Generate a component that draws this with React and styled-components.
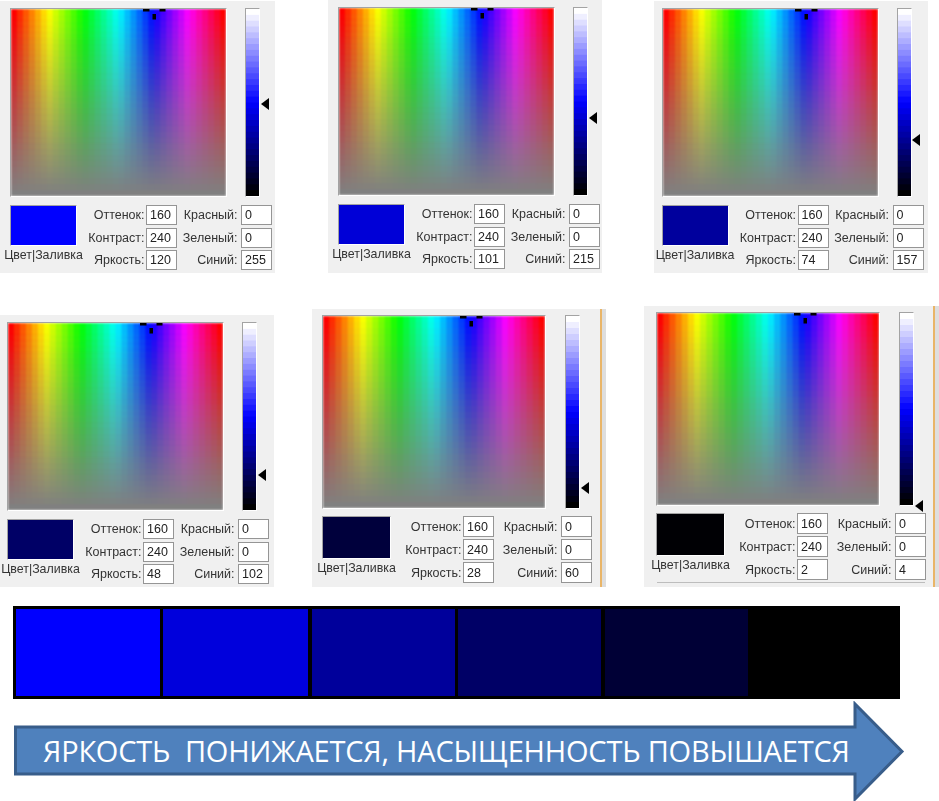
import React from 'react';
import styled, { createGlobalStyle } from 'styled-components';

const Global = createGlobalStyle`
  html, body { margin: 0; padding: 0; background: #fff; }
  body { width: 939px; height: 801px; overflow: hidden; font-family: "Liberation Sans", Arial, sans-serif; }
`;

const Page = styled.main`
  width: 939px;
  height: 801px;
  display: flex;
  flex-direction: column;
`;

const PanelRow = styled.section`
  display: flex;
  align-items: flex-end;
  height: ${p => p.$height}px;
  margin-top: ${p => p.$top}px;
`;

const Panel = styled.article`
  box-sizing: border-box;
  flex: none;
  display: flex;
  flex-direction: column;
  width: ${p => p.$width}px;
  height: ${p => p.$height}px;
  margin-left: ${p => p.$offset}px;
  padding: ${p => p.$top}px 0 0 ${p => p.$pad}px;
  background: #f0f0f0;
  ${p => p.$edge && 'border-right: 2px solid #e9b568; box-shadow: 4px 0 0 #dedede;'}
`;

const Pickers = styled.div`
  display: flex;
  gap: ${p => (p.$large ? 19 : 18)}px;
`;

const Field = styled.div`
  position: relative;
  flex: none;
  width: ${p => (p.$large ? 224 : 217)}px;
  height: ${p => (p.$large ? 194 : 189)}px;
  box-sizing: border-box;
  border: 1px solid;
  border-color: #a3a3a3 #fff #fff #a3a3a3;
  overflow: hidden;
  svg { display: block; width: 100%; height: 100%; filter: blur(0.8px); }
`;

const Crosshair = styled.svg`
  position: absolute;
  top: 0;
  left: 61.5%;
  width: 23px !important;
  height: 12px !important;
  filter: none !important;
`;

const LumBar = styled.div`
  position: relative;
  flex: none;
  width: 13px;
  box-sizing: content-box;
  height: ${p => (p.$large ? 192 : 187)}px;
  border: 1px solid;
  border-color: #a3a3a3 #fff #fff #a3a3a3;
  overflow: visible;
  svg { display: block; width: 100%; height: 100%; filter: blur(0.4px); }
`;

const Pointer = styled.span`
  position: absolute;
  left: 14.5px;
  top: ${p => p.$at - 6}px;
  width: 0;
  height: 0;
  border-style: solid;
  border-width: 6.5px 8px 6.5px 0;
  border-color: transparent #000 transparent transparent;
`;

const Controls = styled.div`
  display: flex;
  margin-top: ${p => (p.$large ? 7 : 8)}px;
`;

const SwatchColumn = styled.div`
  flex: none;
  width: ${p => (p.$large ? 69 : 67)}px;
  display: flex;
  flex-direction: column;
  align-items: center;
`;

const Swatch = styled.div`
  width: 100%;
  height: ${p => (p.$large ? 43 : 41)}px;
  box-sizing: border-box;
  border: 1px solid #fff;
  border-color: #a3a3a3 #fff #fff #a3a3a3;
  background: ${p => p.$color};
`;

const SwatchLabel = styled.div`
  margin-top: 2px;
  font-size: 12.4px;
  line-height: 15px;
  white-space: nowrap;
  color: #333;
  filter: blur(0.25px);
`;

const Values = styled.div`
  display: grid;
  grid-template-columns: ${p => (p.$large ? '72px 31px 67px 31px' : '69px 31px 64px 31px')};
  grid-auto-rows: ${p => (p.$large ? 21 : 20)}px;
  row-gap: ${p => (p.$large ? 2 : 2.5)}px;
`;

const ValueLabel = styled.span`
  align-self: center;
  padding-right: ${p => (p.$second ? 3.5 : 1.5)}px;
  text-align: right;
  font-size: 12.5px;
  white-space: nowrap;
  color: #333;
  filter: blur(0.25px);
`;

const ValueBox = styled.div`
  box-sizing: border-box;
  display: flex;
  align-items: center;
  padding-left: 3px;
  background: #fff;
  border: 1.5px solid #959595;
  font-size: 12.5px;
  color: #222;
  filter: blur(0.2px);
`;

const Rule = styled.div`
  height: 1px;
  margin: ${p => p.$top}px ${p => p.$right}px 0 1px;
  background: ${p => p.$color};
`;

const Scale = styled.section`
  box-sizing: border-box;
  display: flex;
  gap: 3.4px;
  width: 887px;
  height: 93px;
  margin: 19px 0 0 13px;
  padding: 3px;
  background: #000;
`;

const ScaleCell = styled.div`
  width: ${p => p.$width}px;
  flex: none;
  background: ${p => p.$color};
`;

const ArrowBanner = styled.section`
  position: relative;
  display: flex;
  align-items: center;
  width: 892px;
  height: 100px;
  margin: 2px 0 0 13px;
`;

const ArrowShape = styled.svg`
  position: absolute;
  inset: 0;
  width: 100%;
  height: 100%;
`;

const ArrowText = styled.h2`
  position: relative;
  margin: 0 0 0 30px;
  font-family: "Open Sans", "Noto Sans", sans-serif;
  font-weight: 400;
  font-size: 29px;
  line-height: 32px;
  letter-spacing: -0.2px;
  white-space: pre;
  color: #fff;
`;

const hsl = (h, s, l) => `hsl(${h} ${s}% ${l}%)`;

function ColorField() {
  const cols = 36;
  const rows = 32;
  const cells = [];
  for (let r = 0; r < rows; r++) {
    for (let c = 0; c < cols; c++) {
      const h = (c / (cols - 1)) * 360;
      const s = 100 * (1 - r / (rows - 1));
      cells.push(<rect key={`${r}-${c}`} x={c} y={r} width={2} height={2} fill={hsl(h, s, 50)} />);
    }
  }
  return (
    <svg viewBox={`0 0 ${cols} ${rows}`} preserveAspectRatio="none" aria-hidden="true">
      {cells}
    </svg>
  );
}

function LumStrip() {
  const rows = 32;
  const cells = [];
  for (let r = 0; r < rows; r++) {
    cells.push(<rect key={r} x={0} y={r} width={1} height={2} fill={hsl(240, 100, 100 * (1 - r / (rows - 1)))} />);
  }
  return (
    <svg viewBox={`0 0 1 ${rows}`} preserveAspectRatio="none" aria-hidden="true">
      {cells}
    </svg>
  );
}

function Picker({ panel }) {
  const { large, color, at, hue, sat, lum, red, green, blue } = panel;
  return (
    <>
      <Pickers $large={large}>
        <Field $large={large}>
          <ColorField />
          <Crosshair viewBox="0 0 23 12" aria-hidden="true">
            <rect x="0" y="0" width="6.5" height="2.5" fill="#000" />
            <rect x="16.5" y="0" width="6" height="2.5" fill="#000" />
            <rect x="9.5" y="5" width="3.5" height="5.5" fill="#000" />
          </Crosshair>
        </Field>
        <LumBar $large={large}>
          <LumStrip />
          <Pointer $at={at} />
        </LumBar>
      </Pickers>
      <Controls $large={large}>
        <SwatchColumn $large={large}>
          <Swatch $large={large} $color={color} />
          <SwatchLabel>Цвет|Заливка</SwatchLabel>
        </SwatchColumn>
        <Values $large={large}>
          <ValueLabel>Оттенок:</ValueLabel>
          <ValueBox>{hue}</ValueBox>
          <ValueLabel $second>Красный:</ValueLabel>
          <ValueBox>{red}</ValueBox>
          <ValueLabel>Контраст:</ValueLabel>
          <ValueBox>{sat}</ValueBox>
          <ValueLabel $second>Зеленый:</ValueLabel>
          <ValueBox>{green}</ValueBox>
          <ValueLabel>Яркость:</ValueLabel>
          <ValueBox>{lum}</ValueBox>
          <ValueLabel $second>Синий:</ValueLabel>
          <ValueBox>{blue}</ValueBox>
        </Values>
      </Controls>
    </>
  );
}

const base = { hue: 160, sat: 240, red: 0, green: 0 };

const topPanels = [
  { ...base, offset: 0, width: 275, height: 272, pad: 10, top: 7, color: '#0000ff', at: 95, lum: 120, blue: 255 },
  { ...base, offset: 53, width: 274, height: 273, pad: 10, top: 7, color: '#0000d7', at: 110, lum: 101, blue: 215, rule: { top: 5, right: 3, color: '#dcdcdc' } },
  { ...base, offset: 52, width: 274, height: 272, pad: 7.5, top: 7, color: '#00009d', at: 131, lum: 74, blue: 157 },
];

const bottomPanels = [
  { ...base, offset: 0, width: 274, height: 272, pad: 7, top: 7, color: '#000066', at: 152, lum: 48, blue: 102 },
  { ...base, offset: 38, width: 290, height: 278, pad: 10, top: 6, large: true, edge: true, color: '#00003c', at: 172, lum: 28, blue: 60 },
  { ...base, offset: 42, width: 291, height: 281, pad: 12, top: 6, large: true, edge: true, color: '#000004', at: 193, lum: 2, blue: 4, rule: { top: 2, right: 8, color: '#bdbdbd' } },
];

const shades = [
  { color: '#0000ff', width: 144 },
  { color: '#0000dc', width: 145 },
  { color: '#00009b', width: 143 },
  { color: '#000066', width: 143 },
  { color: '#000036', width: 143 },
];

function PanelCard({ panel }) {
  return (
    <Panel $offset={panel.offset} $width={panel.width} $height={panel.height} $pad={panel.pad} $top={panel.top} $edge={panel.edge}>
      <Picker panel={panel} />
      {panel.rule && <Rule $top={panel.rule.top} $right={panel.rule.right} $color={panel.rule.color} />}
    </Panel>
  );
}

export default function App() {
  return (
    <Page>
      <Global />
      <PanelRow $height={273} $top={0}>
        {topPanels.map(p => <PanelCard key={p.lum} panel={p} />)}
      </PanelRow>
      <PanelRow $height={281} $top={33}>
        {bottomPanels.map(p => <PanelCard key={p.lum} panel={p} />)}
      </PanelRow>
      <Scale>
        {shades.map(s => <ScaleCell key={s.color} $color={s.color} $width={s.width} />)}
      </Scale>
      <ArrowBanner>
        <ArrowShape viewBox="0 0 892 100" aria-hidden="true">
          <path d="M2.5 26 H842 V3 L889 50.5 L842 98 V73 H2.5 Z" fill="#4f81bd" stroke="#385d8a" strokeWidth="3" />
        </ArrowShape>
        <ArrowText>{'ЯРКОСТЬ  ПОНИЖАЕТСЯ, НАСЫЩЕННОСТЬ ПОВЫШАЕТСЯ'}</ArrowText>
      </ArrowBanner>
    </Page>
  );
}
